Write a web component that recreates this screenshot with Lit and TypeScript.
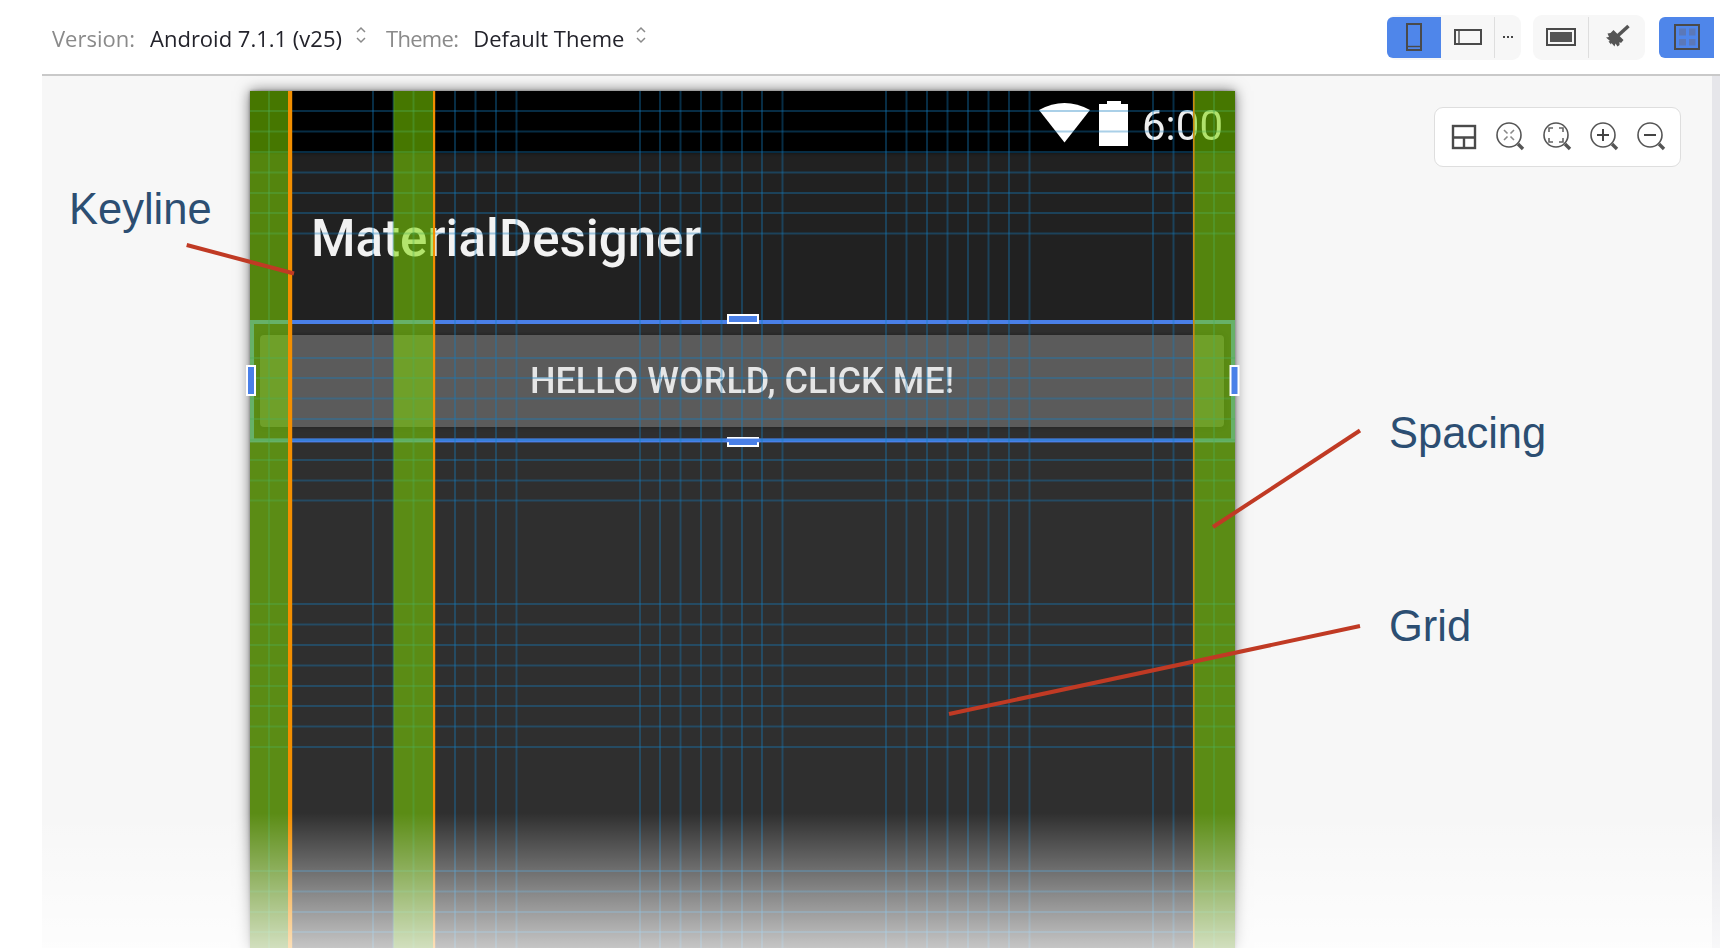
import { LitElement, html, css, svg } from "lit";
import { customElement } from "lit/decorators.js";

const V = [269,289.5,373,393.5,413.5,434,455,475.5,496,516.5,640,660,680.5,701,721.5,742,762,782.5,886,906.5,927,947.5,968,988.5,1009,1029.5,1153,1173.5,1193.5,1214];
const H = [111,131.5,152,172.5,193,213,233.5,358,378,398.5,419,440,460,480.5,500.5,604,624.5,645,665.5,686,706,726.5,747,871,891.5,912,932];
const GREEN = [[250,38.5],[393.5,40.5],[1194,41]];

const updown = (cls = "") => html`<svg class="updown ${cls}" width="12" height="18" viewBox="0 0 12 18"><path d="M2 6l4-4 4 4M2 12l4 4 4-4" fill="none" stroke="#8a8a8a" stroke-width="1.5"/></svg>`;

const lens = (inner: unknown) => html`<svg width="32" height="32" viewBox="0 0 32 32">
  <circle cx="14" cy="14" r="12" fill="none" stroke="#555" stroke-width="1.6"/>
  <path d="M23 23l5 5" stroke="#555" stroke-width="3.4"/>${inner}</svg>`;

@customElement("app-root")
export class AppRoot extends LitElement {
  static styles = css`
    :host { display: block; position: relative; width: 1720px; height: 948px; overflow: hidden; background: #fff; font-family: "Open Sans", sans-serif; }
    .toolbar { height: 74px; display: flex; align-items: center; padding-left: 52px; box-sizing: border-box; }
    .lbl, .val { font-size: 22px; filter: blur(.3px); white-space: nowrap; padding-top: 2px; }
    .lbl { color: #8a8a8a; margin-right: 15px; }
    .lbl.theme { letter-spacing: -.7px; }
    .val { color: #23232b; }
    .updown { margin: 0 19px 4px 13px; }
    .updown.tight { margin-left: 11px; }
    .spacer { flex: 1; }
    .group { display: flex; align-items: center; height: 45px; background: #f7f7f7; border-radius: 9px; margin-right: 12px; }
    .group.mid { margin-right: 14px; }
    .group.last { margin-right: 6px; background: none; }
    .tb { display: flex; align-items: center; justify-content: center; width: 54px; height: 41px; border-right: 1.5px solid #dedede; box-sizing: border-box; }
    .tb.plain { border-right: none; }
    .tb.more { width: 26px; }
    .tb.on { background: #4f86ea; border-right: none; border-radius: 6px 0 0 6px; }
    .tb.wide { width: 56px; }
    .tb.solo { width: 55px; }
    .canvas { margin-left: 42px; height: 874px; display: flex; border-top: 2px solid #c9c9c9; box-sizing: border-box; }
    .stage { flex: 1; background: #f7f7f7; position: relative; }
    .strip { width: 8px; background: #e6e6ea; }
    .phone { width: 985px; height: 860px; margin: 15px 0 0 208px; background: #2f2f2f; box-shadow: 0 0 13px rgba(0,0,0,.55), 0 0 3px rgba(0,0,0,.35); font-family: Roboto, sans-serif; }
    .status { height: 62px; background: #000; display: flex; justify-content: flex-end; align-items: flex-start; padding: 10px 12px 0 0; box-sizing: border-box; gap: 9px; }
    .status svg { filter: blur(.4px); }
    .time { font-size: 42px; line-height: 39px; color: #eee; margin: 5px 0 0 5px; filter: blur(.6px); }
    .action { height: 168px; background: #212121; padding: 56px 0 0 61px; box-sizing: border-box; box-shadow: inset 0 3px 3px -2px rgba(0,0,0,.3); }
    .title { font-size: 51px; line-height: 60px; font-weight: 500; color: #f2f2f2; filter: blur(.7px); }
    .content { padding: 14px 11px 0 10px; }
    .btn { height: 92px; background: #5b5b5b; border-radius: 4px; display: flex; align-items: center; justify-content: center; font-size: 36px; font-weight: 500; color: #e6e6e6; box-shadow: 0 0 4px rgba(0,0,0,.35); }
    .btn span { filter: blur(.7px); }
    .overlay { position: absolute; left: 0; top: 0; }
    .zoom { position: absolute; left: 1392px; top: 31px; width: 247px; height: 60px; box-sizing: border-box; display: flex; align-items: center; gap: 15px; padding-left: 15.5px; background: #fff; border: 1.5px solid #dedede; border-radius: 9px; }
    .zoom .layout { margin-right: 3.5px; }
    .note { position: absolute; font-family: "Liberation Sans", sans-serif; font-size: 43.5px; line-height: 48px; color: #2c4e72; }
    .keyline { left: 69px; top: 185px; }
    .spacing { left: 1389px; top: 409px; }
    .grid { left: 1389px; top: 602px; }
    .fade { position: absolute; left: 0; right: 0; top: 813px; bottom: 0; background: linear-gradient(to bottom, rgba(255,255,255,0), rgba(255,255,255,.72)); }
  `;

  private overlay() {
    return html`<svg class="overlay" width="1720" height="948" viewBox="0 0 1720 948">
      <g fill="none" stroke="#4a80e8" stroke-width="4">
        <rect x="252" y="322" width="981" height="118.4"/>
      </g>
      <g stroke="rgb(20,125,190)" stroke-opacity=".36" stroke-width="2">
        ${V.map((x) => svg`<line x1=${x} x2=${x} y1="91" y2="948"/>`)}
        ${H.map((y) => svg`<line x1="250" x2="1235" y1=${y} y2=${y}/>`)}
      </g>
      <g fill="rgb(128,216,0)" fill-opacity=".55">
        ${GREEN.map(([x, w]) => svg`<rect x=${x} y="91" width=${w} height="857"/>`)}
      </g>
      <rect x="288" y="91" width="4.2" height="857" fill="#f28e00"/>
      <rect x="433" y="91" width="2.2" height="857" fill="#f28e00"/>
      <rect x="1193" y="91" width="1.6" height="857" fill="#c98c10"/>
      <g fill="#4a80e8" stroke="#fff" stroke-width="2">
        <rect x="247" y="366" width="8" height="29"/>
        <rect x="1230.5" y="366" width="8" height="29"/>
        <rect x="728" y="315" width="30" height="8"/>
        <rect x="728" y="438" width="30" height="8"/>
      </g>
      <rect x="726" y="438.6" width="34" height="3.6" fill="#4a80e8"/>
      <g stroke="#c03a24" stroke-width="4" stroke-linecap="butt">
        <line x1="186.7" y1="245" x2="294" y2="273.5"/>
        <line x1="1360" y1="430.5" x2="1213" y2="527"/>
        <line x1="1360" y1="626" x2="949" y2="714"/>
      </g>
    </svg>`;
  }

  render() {
    return html`
      <div class="toolbar">
        <span class="lbl">Version:</span><span class="val">Android 7.1.1 (v25)</span>${updown()}
        <span class="lbl theme">Theme:</span><span class="val">Default Theme</span>${updown("tight")}
        <div class="spacer"></div>
        <div class="group">
          <div class="tb on">
            <svg width="18" height="30" viewBox="0 0 18 30"><rect x="2" y="2" width="14" height="26" fill="none" stroke="#4a4a4a" stroke-width="2"/><path d="M2 24.500h14" stroke="#4a4a4a" stroke-width="1.400"/></svg>
          </div>
          <div class="tb">
            <svg width="30" height="18" viewBox="0 0 30 18"><rect x="2" y="2" width="26" height="14" fill="none" stroke="#4a4a4a" stroke-width="2"/><path d="M6 2v14" stroke="#4a4a4a" stroke-width="1.400"/></svg>
          </div>
          <div class="tb more plain">
            <svg width="12" height="4" viewBox="0 0 12 4"><path d="M1 2h2M5 2h2M9 2h2" stroke="#444" stroke-width="2"/></svg>
          </div>
        </div>
        <div class="group mid">
          <div class="tb wide">
            <svg width="30" height="18" viewBox="0 0 30 18"><rect x="1" y="1" width="28" height="16" fill="none" stroke="#4a4a4a" stroke-width="2"/><rect x="4" y="4" width="22" height="10" fill="#555"/></svg>
          </div>
          <div class="tb wide plain">
            <svg width="26" height="26" viewBox="0 0 26 26"><path d="M24.500 2L13.500 12" stroke="#555" stroke-width="3.600"/><path d="M9.500 6l10 10-2.500 3-1.500-1 0 3-2 1.500-2-3-1 3-3-3.500-0.500 1.500-2.500-3 1.500-.5-4-3.500 3-.5-1.500-3.500 3-.5z" fill="#555"/></svg>
          </div>
        </div>
        <div class="group last">
          <div class="tb on plain solo">
            <svg width="26" height="26" viewBox="0 0 26 26"><rect x="1" y="1" width="24" height="24" fill="none" stroke="#4a4a4a" stroke-width="2"/><g fill="#5b78b8"><rect x="5" y="4.500" width="7" height="7"/><rect x="15" y="4.500" width="6.500" height="7"/><rect x="5" y="15" width="7" height="6.500"/><rect x="15" y="15" width="6.500" height="6.500"/></g></svg>
          </div>
        </div>
      </div>
      <div class="canvas">
        <div class="stage">
          <div class="phone">
            <div class="status">
              <svg width="51" height="42" viewBox="0 0 51 42"><path d="M0 9Q25.500 -5 51 9L25.500 41.500z" fill="#fff"/></svg>
              <svg width="29" height="45" viewBox="0 0 29 45"><path d="M8 0h14v3h7v42H0V3h8z" fill="#fff"/></svg>
              <span class="time">6:00</span>
            </div>
            <div class="action"><div class="title">MaterialDesigner</div></div>
            <div class="content"><div class="btn"><span>HELLO WORLD, CLICK ME!</span></div></div>
          </div>
          <div class="zoom">
            <svg class="layout" width="26" height="26" viewBox="0 0 26 26"><g fill="none" stroke="#4a4a4a" stroke-width="2.400"><rect x="2" y="2" width="22" height="22"/><path d="M2 13.500h22M13 13.500V24"/></g></svg>
            ${lens(svg`<path d="M9 9l3.500 3.500M19 9l-3.500 3.500M9 19l3.500-3.500M19 19l-3.500-3.500" stroke="#888" stroke-width="1.600"/>`)}
            ${lens(svg`<path d="M7 11V7h4M17 7h4v4M21 17v4h-4M11 21H7v-4" fill="none" stroke="#666" stroke-width="1.600"/>`)}
            ${lens(svg`<path d="M8 14h12M14 8v12" stroke="#444" stroke-width="2"/>`)}
            ${lens(svg`<path d="M8 14h12" stroke="#444" stroke-width="2"/>`)}
          </div>
        </div>
        <div class="strip"></div>
      </div>
      ${this.overlay()}
      <div class="note keyline">Keyline</div>
      <div class="note spacing">Spacing</div>
      <div class="note grid">Grid</div>
      <div class="fade"></div>
    `;
  }
}
